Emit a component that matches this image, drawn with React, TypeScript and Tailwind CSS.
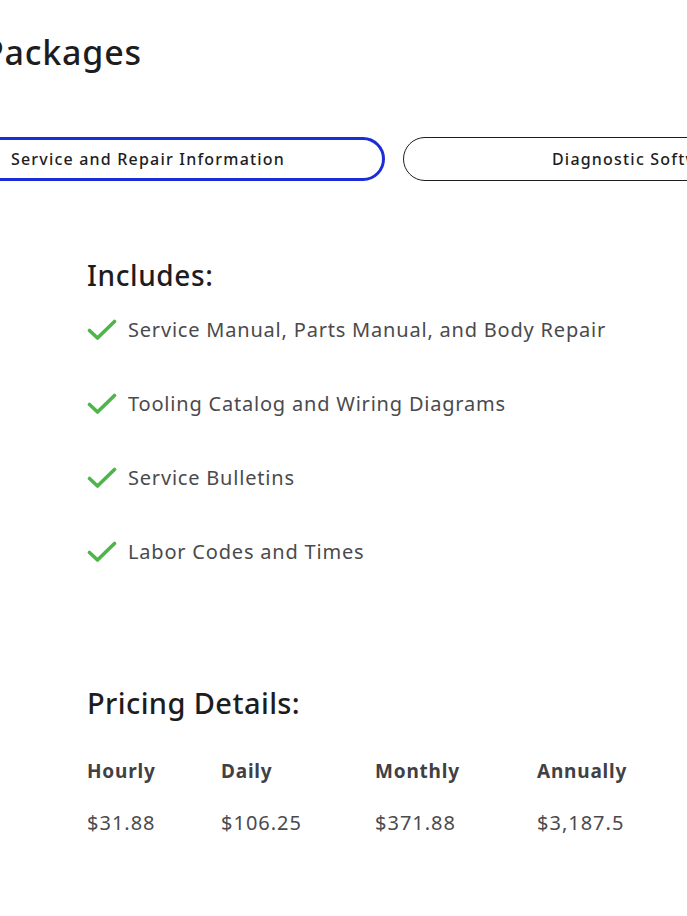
import React from "react";

const features = [
  "Service Manual, Parts Manual, and Body Repair",
  "Tooling Catalog and Wiring Diagrams",
  "Service Bulletins",
  "Labor Codes and Times",
];

const prices = [
  { label: "Hourly", value: "$31.88", w: "w-[134px]" },
  { label: "Daily", value: "$106.25", w: "w-[154px]" },
  { label: "Monthly", value: "$371.88", w: "w-[162px]" },
  { label: "Annually", value: "$3,187.5", w: "w-[140px]" },
];

function Check() {
  return (
    <svg width="30" height="22" viewBox="0 0 30 22" fill="none" className="shrink-0">
      <path
        d="M2.5 11.5 L10.5 19 L27.5 2.5"
        stroke="#4cb648"
        strokeWidth="3.6"
        strokeLinecap="round"
        strokeLinejoin="round"
      />
    </svg>
  );
}

export default function App() {
  return (
    <div
      className="w-[687px] h-[916px] overflow-hidden bg-white text-[#1d1d1f]"
      style={{ fontFamily: '"Noto Sans", "Open Sans", sans-serif' }}
    >
      {/* Header + tabs (page is scrolled sideways) */}
      <div className="ml-[-89px] w-[1000px]">
        <h1 className="pl-[72px] pt-[31px] text-[34px] leading-[42px] font-medium tracking-[0.8px]">
          Packages
        </h1>
        <div className="flex gap-[18px] mt-[64px]">
          <button className="shrink-0 w-[474px] h-[44px] rounded-full border-[3px] border-[#1b2ed6] text-[16px] font-medium tracking-[1.2px] text-[#1d1d1f]">
            Service and Repair Information
          </button>
          <button className="shrink-0 w-[474px] h-[44px] rounded-full border-[1.5px] border-[#1d1d1f] text-[16px] font-medium tracking-[1.2px] text-[#1d1d1f]">
            Diagnostic Software
          </button>
        </div>
      </div>

      {/* Includes */}
      <div className="pl-[87px] pt-[78px]">
        <h2 className="text-[28px] leading-[32px] font-medium tracking-[0.6px]">Includes:</h2>
        <ul className="mt-[27px] flex flex-col gap-[50px]">
          {features.map((f) => (
            <li key={f} className="flex items-center gap-[11px] h-[24px]">
              <Check />
              <span className="text-[20px] text-[#4a4a4d] tracking-[0.8px] whitespace-nowrap">{f}</span>
            </li>
          ))}
        </ul>
      </div>

      {/* Pricing */}
      <div className="pl-[87px] pt-[122px]">
        <h2 className="text-[29px] leading-[34px] font-medium tracking-[0.4px]">Pricing Details:</h2>
        <div className="flex mt-[37px]">
          {prices.map((p) => (
            <div key={p.label} className={`${p.w} shrink-0 flex flex-col gap-[22px]`}>
              <span className="text-[19px] font-bold text-[#404045] tracking-[0.8px]">{p.label}</span>
              <span className="text-[20px] text-[#4a4a4d] tracking-[1px]">{p.value}</span>
            </div>
          ))}
        </div>
      </div>
    </div>
  );
}
